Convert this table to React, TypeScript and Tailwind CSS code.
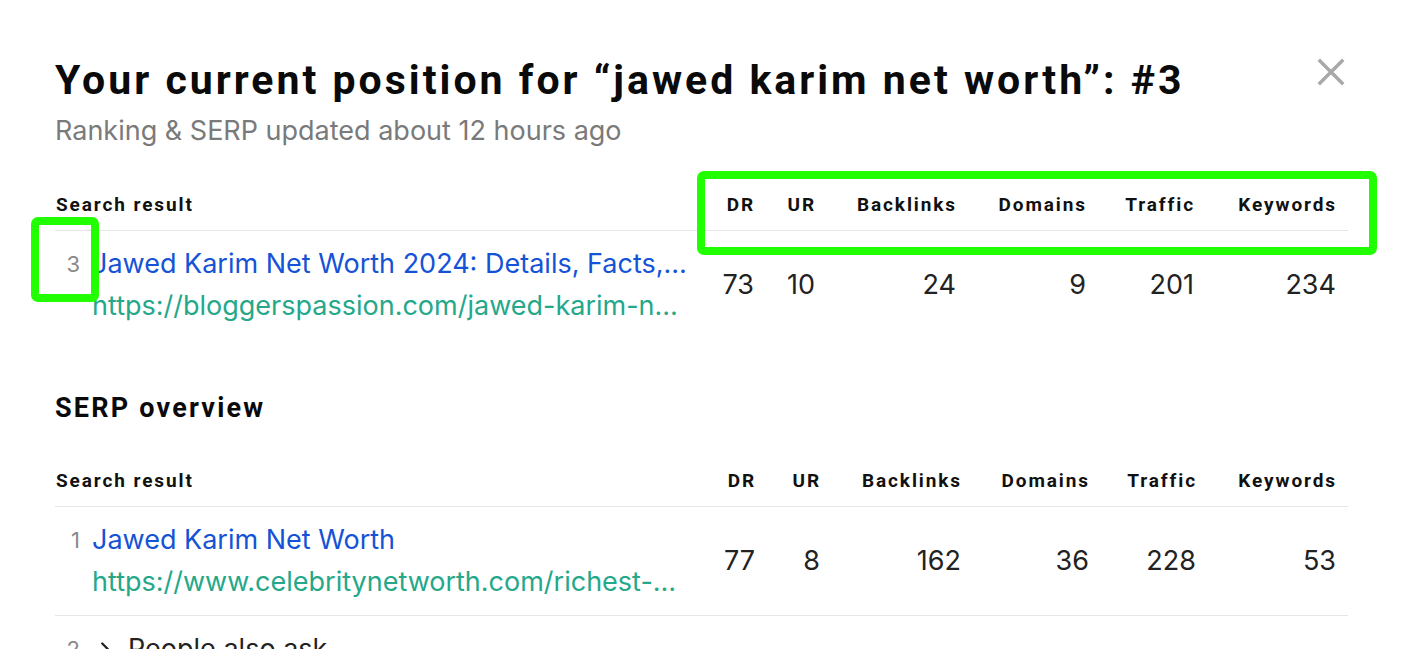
import React from 'react';
import { ChevronRight } from 'lucide-react';

type Row = {
  rank: number;
  title: string;
  url?: string;
  stats?: (number | string)[];
  expandable?: boolean;
};

const cols = ['DR', 'UR', 'Backlinks', 'Domains', 'Traffic', 'Keywords'];
const display = { fontFamily: 'Roboto, "Noto Sans", sans-serif' };

const CloseIcon = () => (
  <svg width="28" height="28" viewBox="0 0 28 28" className="text-[#a8a8a8]">
    <path d="M3 3 L25 25 M25 3 L3 25" stroke="currentColor" strokeWidth="3.5" strokeLinecap="square" />
  </svg>
);

const ResultTable: React.FC<{ rows: Row[]; widths: string[] }> = ({ rows, widths }) => (
  <div className="w-full">
    <div
      className="flex items-center border-b border-[#e6e6e6] pb-[13px] text-[19px] font-bold leading-6 tracking-[1.9px] text-[#111]"
      style={display}
    >
      <div className="flex-1 pl-[1px]">Search result</div>
      {cols.map((c, i) => (
        <div key={c} className={`${widths[i]} text-right`}>
          {c}
        </div>
      ))}
      <div className="w-[11px]" />
    </div>
    {rows.map((r) => (
      <div key={r.rank} className="flex items-center border-b border-[#e6e6e6] last:border-b-0 py-[12px]">
        <div className="flex flex-1 items-start overflow-hidden">
          <div className="w-[25px] shrink-0 text-right text-[22px] leading-[42px] text-[#8a8a8a]">{r.rank}</div>
          {r.expandable ? (
            <div className="ml-[14px] flex items-center text-[27px] leading-[42px] text-[#222]">
              <ChevronRight size={22} strokeWidth={2.5} className="text-[#222]" />
              <span className="ml-[12px]">{r.title}</span>
            </div>
          ) : (
            <div className="ml-[12px] min-w-0 text-[27px] leading-[42px]">
              <div className="whitespace-nowrap text-[#1553d6]">{r.title}</div>
              <div className="whitespace-nowrap text-[#25a88a]">{r.url}</div>
            </div>
          )}
        </div>
        {r.stats &&
          r.stats.map((s, i) => (
            <div key={i} className={`${widths[i]} text-right text-[27px] leading-[42px] text-[#222]`}>
              {s}
            </div>
          ))}
        {r.stats && <div className="w-[12px]" />}
      </div>
    ))}
  </div>
);

export default function App() {
  return (
    <div
      className="relative h-[649px] w-full overflow-hidden bg-white"
      style={{ fontFamily: 'Inter, "Noto Sans", sans-serif' }}
    >
      <div className="w-[1293px] ml-[55px] pt-[56px]">
        <div className="flex items-start justify-between">
          <h1 className="text-[41px] font-bold leading-[48px] tracking-[3px] text-[#0a0a0a]" style={display}>
            Your current position for “jawed karim net worth”: #3
          </h1>
          <button className="mr-[3px] mt-[2px]">
            <CloseIcon />
          </button>
        </div>
        <p className="mt-[9px] text-[27px] leading-[36px] text-[#7a7a7a]">
          Ranking &amp; SERP updated about 12 hours ago
        </p>

        <div className="mt-[44px] w-full">
          <ResultTable
            widths={['w-[54px]', 'w-[61px]', 'w-[141px]', 'w-[130px]', 'w-[108px]', 'w-[142px]']}
            rows={[
              {
                rank: 3,
                title: 'Jawed Karim Net Worth 2024: Details, Facts,…',
                url: 'https://bloggerspassion.com/jawed-karim-n…',
                stats: [73, 10, 24, 9, 201, 234],
              },
            ]}
          />
        </div>

        <h2 className="mt-[51px] text-[27px] font-bold leading-[36px] tracking-[2.2px] text-[#0a0a0a]" style={display}>
          SERP overview
        </h2>

        <div className="mt-[43px] w-full">
          <ResultTable
            widths={['w-[55px]', 'w-[65px]', 'w-[141px]', 'w-[128px]', 'w-[107px]', 'w-[140px]']}
            rows={[
              {
                rank: 1,
                title: 'Jawed Karim Net Worth',
                url: 'https://www.celebritynetworth.com/richest-…',
                stats: [77, 8, 162, 36, 228, 53],
              },
              { rank: 2, title: 'People also ask', expandable: true },
            ]}
          />
        </div>
      </div>

      {/* highlight overlays */}
      <div className="absolute left-[31px] top-[217px] h-[85px] w-[68px] rounded-[7px] border-[8px] border-[#22ff00]" />
      <div className="absolute left-[697px] top-[171px] h-[84px] w-[680px] rounded-[7px] border-[8px] border-[#22ff00]" />
    </div>
  );
}
